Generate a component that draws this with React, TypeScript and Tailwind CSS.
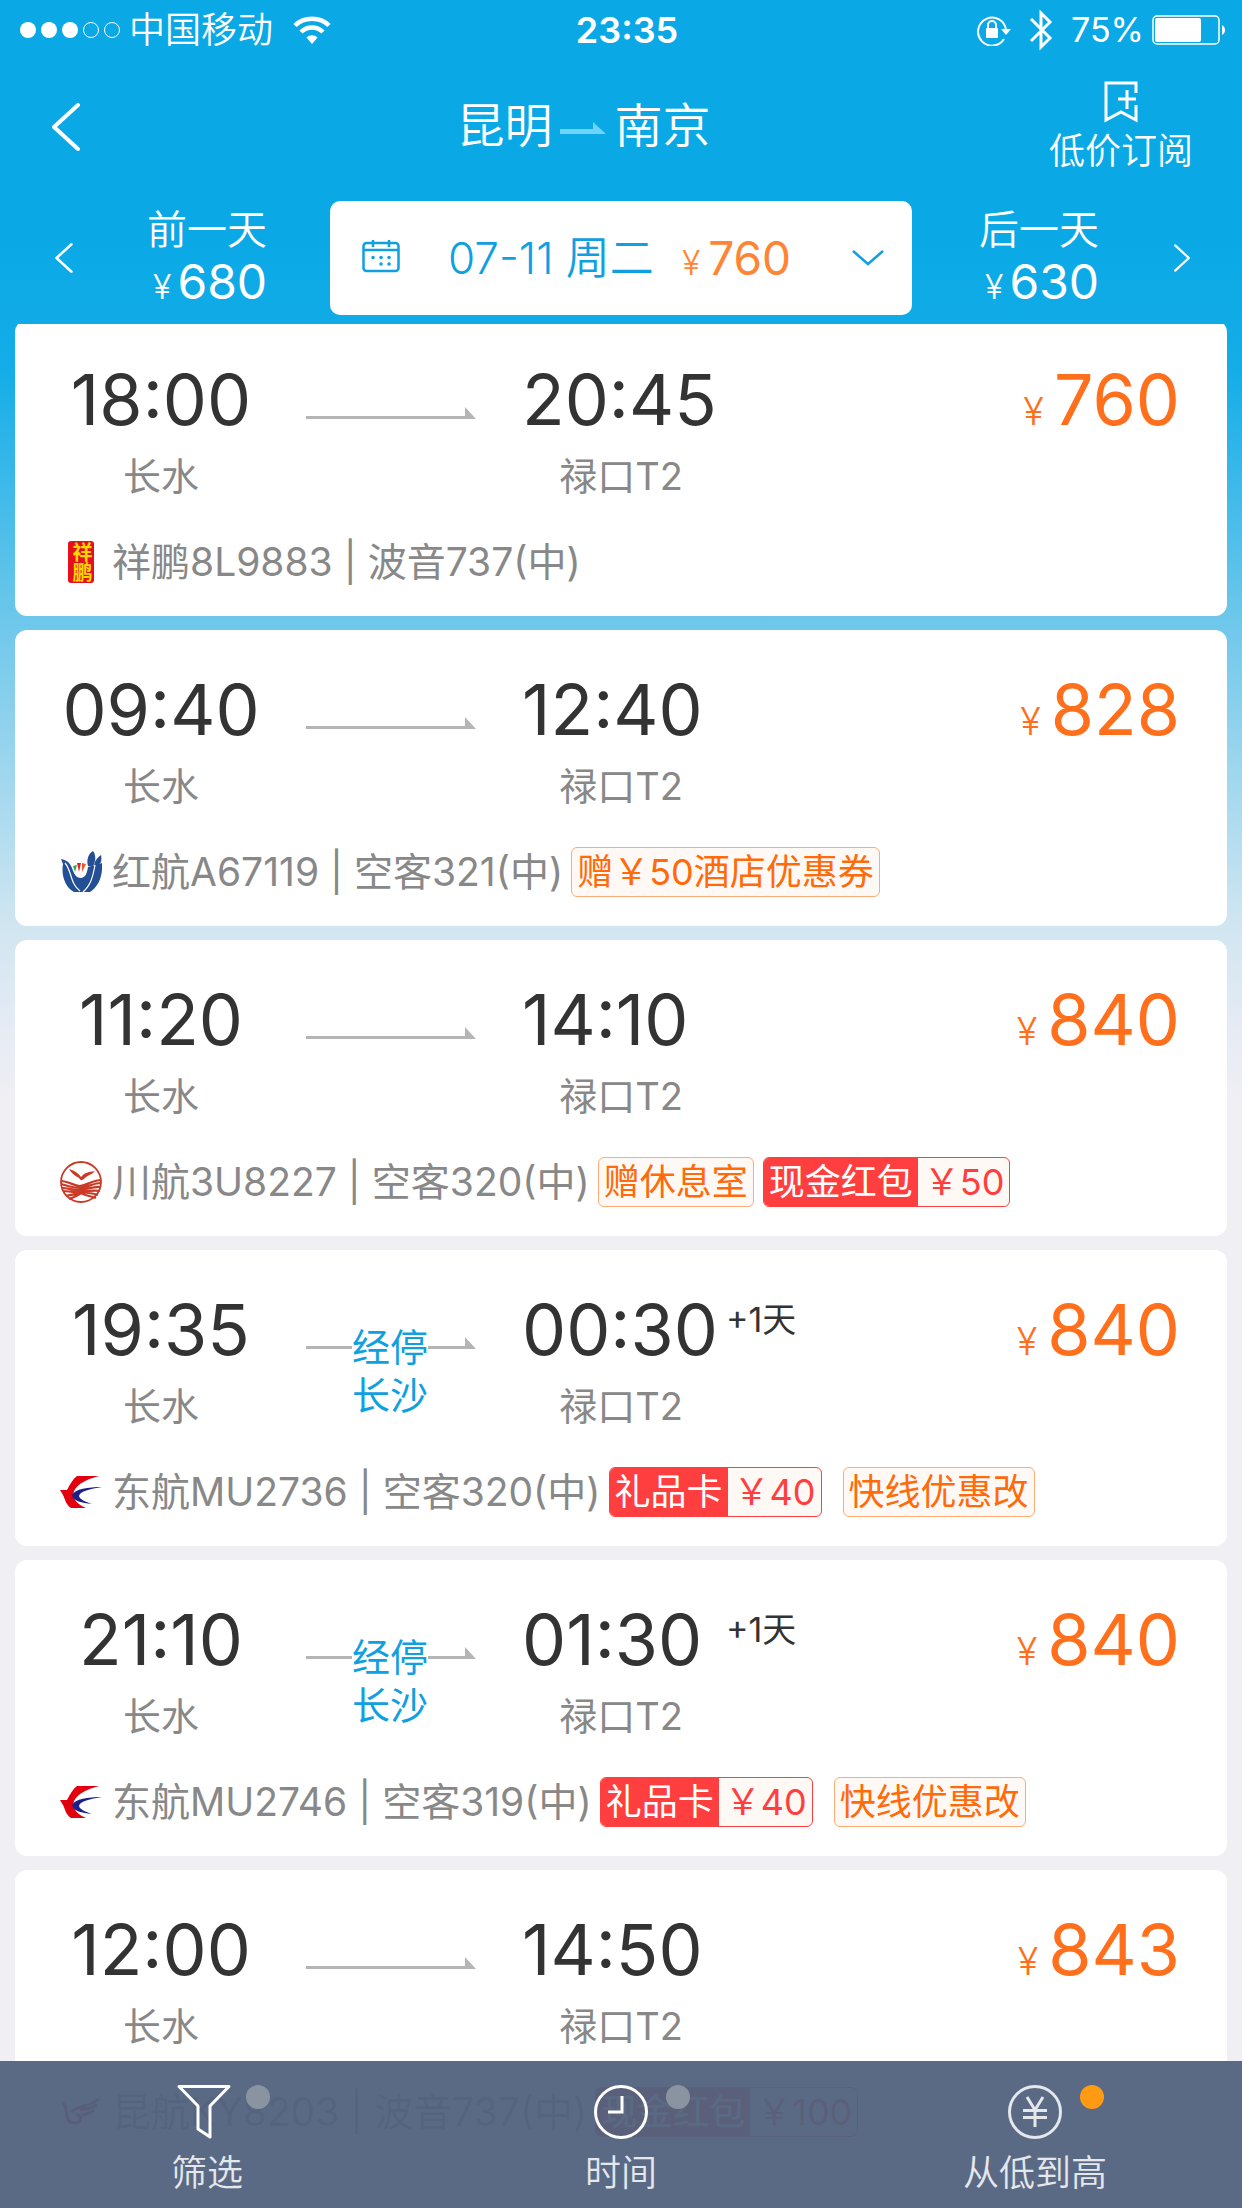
import type { ReactNode } from "react";

type Tag = { text: string; amount?: string };

type Flight = {
  depart: string;
  arrive: string;
  nextDay?: boolean;
  stop?: string;
  price: string;
  logo: ReactNode;
  airline: string;
  plane: string;
  tags: Tag[];
};

const XiangPengLogo = () => (
  <svg viewBox="0 0 42 42" className="size-[42px]" aria-hidden="true">
    <rect x="8" y="0" width="26" height="42" rx="3" fill="#e60f1e" />
    <text x="21" y="1" fontSize="20" fontWeight="700" fill="#ffd800" className="[writing-mode:vertical-rl]">
      祥鹏
    </text>
  </svg>
);

const HongTuLogo = () => (
  <svg viewBox="0 0 42 42" className="size-[42px]" aria-hidden="true">
    <path
      d="M1 8C7 9 10 12 12 17C14 23 16 27 21 27C26 26 27 22 28 16C31 15 37 14 42 12C43 26 38 36 30 41H14C5 36 1 24 3 13Z"
      fill="#234f95"
    />
    <path d="M28 15C26 8 29 2 33 0C36 4 36 10 33 15Z" fill="#234f95" />
    <path d="M34 14C35 9 38 6 41 4C42 9 41 12 39 14Z" fill="#234f95" />
    <path d="M5 12C12 20 10 33 20 40M35 14C33 25 31 34 23 41" fill="none" stroke="#fff" strokeWidth="1.200" />
    <path d="M15 21L13 15L17 14Z" fill="#2faa4e" />
    <path d="M19 21L17 12L21 12Z" fill="#e3232c" />
    <path d="M22 21L22 12L26 13Z" fill="#f0582b" />
  </svg>
);

const SichuanLogo = () => (
  <svg viewBox="0 0 42 42" className="size-[42px]" fill="none" stroke="#cb3a26" aria-hidden="true">
    <circle cx="21" cy="21" r="20" strokeWidth="1.800" />
    <path
      d="M9 8C15 10 18 12 21 16C24 12 28 11 35 10C32 14 27 14 24 18C22 20 20 19 19 17C15 15 11 12 9 8Z"
      fill="#cb3a26"
      stroke="none"
    />
    <path
      d="M1 20C8 20 14 25 20 25C27 24 34 19 41 19M1 23C8 25 14 27 20 27C28 26 34 22 41 22M2 27C9 27 14 30 20 29C28 28 34 25 41 26M3 30C10 30 14 32 20 31C28 30 34 29 40 30M6 35C11 33 17 34 21 31C27 32 33 32 38 34M9 38C14 36 18 35 21 32C26 35 31 35 36 37"
      strokeWidth="2.200"
    />
  </svg>
);

const EasternLogo = () => (
  <svg viewBox="0 0 42 42" className="size-[42px]" aria-hidden="true">
    <path
      d="M0 19H7C10 13 13 8 17 5H39C28 8 18 12 14 20C11 28 19 34 26 37H11C6 34 5 28 3 24Z"
      fill="#e2000f"
    />
    <path d="M42 16C28 16 15 18 12 24C13 30 22 32 32 33C26 31 19 28 19 25C20 20 30 18 42 16Z" fill="#1c1f86" />
  </svg>
);

const KunmingLogo = () => (
  <svg viewBox="0 0 42 42" className="size-[42px]" fill="none" stroke="#c8102e" strokeWidth="3" aria-hidden="true">
    <path d="M2 12C9 14 3 32 14 32C23 32 22 23 16 24M11 21C18 14 30 16 39 8M20 19C27 18 32 17 37 14M22 24C28 22 31 22 34 19" />
  </svg>
);

const flights: Flight[] = [
  {
    depart: "18:00",
    arrive: "20:45",
    price: "760",
    logo: <XiangPengLogo />,
    airline: "祥鹏8L9883",
    plane: "波音737(中)",
    tags: [],
  },
  {
    depart: "09:40",
    arrive: "12:40",
    price: "828",
    logo: <HongTuLogo />,
    airline: "红航A67119",
    plane: "空客321(中)",
    tags: [{ text: "赠￥50酒店优惠券" }],
  },
  {
    depart: "11:20",
    arrive: "14:10",
    price: "840",
    logo: <SichuanLogo />,
    airline: "川航3U8227",
    plane: "空客320(中)",
    tags: [{ text: "赠休息室" }, { text: "现金红包", amount: "50" }],
  },
  {
    depart: "19:35",
    arrive: "00:30",
    nextDay: true,
    stop: "长沙",
    price: "840",
    logo: <EasternLogo />,
    airline: "东航MU2736",
    plane: "空客320(中)",
    tags: [{ text: "礼品卡", amount: "40" }, { text: "快线优惠改" }],
  },
  {
    depart: "21:10",
    arrive: "01:30",
    nextDay: true,
    stop: "长沙",
    price: "840",
    logo: <EasternLogo />,
    airline: "东航MU2746",
    plane: "空客319(中)",
    tags: [{ text: "礼品卡", amount: "40" }, { text: "快线优惠改" }],
  },
  {
    depart: "12:00",
    arrive: "14:50",
    price: "843",
    logo: <KunmingLogo />,
    airline: "昆航KY8203",
    plane: "波音737(中)",
    tags: [{ text: "现金红包", amount: "100" }],
  },
];

const Chevron = ({ d, className }: { d: string; className: string }) => (
  <svg viewBox="0 0 28 48" className={className} fill="none" stroke="currentColor" aria-hidden="true">
    <path d={d} strokeLinecap="round" strokeLinejoin="round" />
  </svg>
);

const StatusBar = () => (
  <div className="grid h-[60px] grid-cols-[1fr_auto_1fr] items-center pl-5 pr-4 text-4xl">
    <div className="flex items-center">
      <div className="flex gap-[5px] mr-[9px]">
        <i className="size-4 rounded-full bg-white" />
        <i className="size-4 rounded-full bg-white" />
        <i className="size-4 rounded-full bg-white" />
        <i className="size-4 rounded-full border border-white" />
        <i className="size-4 rounded-full border border-white" />
      </div>
      <span className="font-[350]">中国移动</span>
      <svg viewBox="0 0 38 28" className="ml-5 h-7 w-[38px]" fill="none" stroke="#fff" aria-hidden="true">
        <path d="M2 9.500C11 .5 27 .5 36 9.500" strokeWidth="4.500" />
        <path d="M8 16C14 10 24 10 30 16" strokeWidth="4.500" />
        <path d="M19 28L13.500 21.500C16.500 18.500 21.500 18.500 24.500 21.500Z" fill="#fff" stroke="none" />
      </svg>
    </div>
    <div className="pl-2 font-semibold">23:35</div>
    <div className="flex items-center justify-end">
      <svg viewBox="0 0 34 32" className="h-8 w-[34px]" fill="none" stroke="#fff" strokeWidth="2" aria-hidden="true">
        <path d="M27 25A14 14 0 1 1 29 16" />
        <path d="M24 15H34L29 21Z" fill="#fff" stroke="none" />
        <path d="M11 15V11A4 4 0 0 1 19 11V15" />
        <rect x="9" y="14" width="12" height="10" rx="1" fill="#fff" stroke="none" />
      </svg>
      <svg viewBox="0 0 24 42" className="ml-[18px] h-[42px] w-6" fill="none" stroke="#fff" strokeWidth="3" aria-hidden="true">
        <path d="M2 10L21 29L12 38V4L21 13L2 32" />
      </svg>
      <span className="ml-[18px] text-[34px]">75%</span>
      <svg viewBox="0 0 74 30" className="ml-2 h-[30px] w-[74px]" aria-hidden="true">
        <rect x="1" y="1" width="66" height="28" rx="4" fill="none" stroke="#fff" strokeWidth="1.500" />
        <rect x="3" y="3" width="46" height="24" rx="2" fill="#fff" />
        <path d="M70 10C74 12 74 18 70 20Z" fill="#fff" />
      </svg>
    </div>
  </div>
);

const DayPrice = ({ label, price }: { label: string; price: string }) => (
  <span className="text-center leading-[52px]">
    <span className="block text-[40px] font-[350]">{label}</span>
    <span className="block pl-1.5 text-[48px]">
      <span className="mr-1.5 text-[34px] font-[350]">¥</span>
      {price}
    </span>
  </span>
);

const Header = () => (
  <header className="shrink-0 pb-[9px] text-white">
    <StatusBar />
    <div className="flex h-[134px] items-center justify-between pl-[52px] pr-[49px]">
      <button aria-label="返回" className="w-[66px]">
        <Chevron d="M26 2L2 24L26 46" className="h-12 w-7 stroke-4" />
      </button>
      <h1 className="flex items-center pb-0.5 text-[48px] font-[350]">
        昆明
        <svg viewBox="0 0 46 12" className="mx-2 mt-1 h-3 w-[46px]" fill="#6fd4fb" aria-hidden="true">
          <path d="M0 7H33V0L46 12H0Z" />
        </svg>
        南京
      </h1>
      <button className="flex flex-col items-center text-4xl leading-[44px] font-[350]">
        <svg viewBox="0 0 34 42" className="mb-1.5 h-[42px] w-[34px]" fill="none" stroke="#fff" strokeWidth="3" aria-hidden="true">
          <path d="M32 12V2H2V39L17 31L32 39V24M14 18H32M23 9V28" />
        </svg>
        低价订阅
      </button>
    </div>
    <div className="mt-[7px] grid h-[114px] grid-cols-[330px_1fr_330px]">
      <button className="flex items-center gap-[74px] pl-[55px]">
        <Chevron d="M26 2L2 24L26 46" className="h-[30px] w-[18px] stroke-4" />
        <DayPrice label="前一天" price="680" />
      </button>
      <button className="flex items-center rounded-[10px] bg-white pl-8 pr-7 text-[#109fe0]">
        <svg viewBox="0 0 38 34" className="mb-1 h-[34px] w-[38px]" fill="none" stroke="currentColor" strokeWidth="2.500" aria-hidden="true">
          <rect x="1.500" y="4" width="35" height="28" rx="3" />
          <path d="M2 11H36M11 1V8M27 1V8" />
          <path
            d="M11 18.500h.1M19 18.500h.1M27 18.500h.1M19 25h.1M27 25h.1"
            strokeWidth="3.500"
            strokeLinecap="round"
          />
        </svg>
        <span className="ml-12 text-[44px] font-[350]">07-11 周二</span>
        <span className="ml-7 text-[46px] text-[#ff8534]">
          <span className="mr-2 text-[34px] font-[350]">¥</span>760
        </span>
        <svg viewBox="0 0 32 16" className="ml-auto h-4 w-8" fill="none" stroke="currentColor" strokeWidth="2.500" aria-hidden="true">
          <path d="M1 1L16 14L31 1" />
        </svg>
      </button>
      <button className="flex items-center justify-between pl-[67px] pr-[52px]">
        <DayPrice label="后一天" price="630" />
        <Chevron d="M2 2L26 24L2 46" className="h-7 w-4 stroke-4" />
      </button>
    </div>
  </header>
);

const TagBadge = ({ tag }: { tag: Tag }) =>
  tag.amount ? (
    <span className="mr-3 flex h-[50px] overflow-hidden rounded-md border border-[#ff3f3f] bg-[#fff9f5] text-[#ff3f3f]">
      <span className="bg-[#ff3f3f] px-[5px] text-white">{tag.text}</span>
      <span className="pl-1.5 pr-[5px]">￥{tag.amount}</span>
    </span>
  ) : (
    <span className="h-[50px] rounded-md border border-[#ffab75] bg-[#fff9f5] px-[5px] text-[#ff6a0a]">{tag.text}</span>
  );

// thin line with a half arrow head, broken in the middle when the flight stops over
const Route = ({ stop }: { stop?: string }) => (
  <div className="flex w-[170px] items-center self-start pt-[33px] text-[38px] leading-[48px] text-[#109fe0]">
    <div className="h-[3px] flex-1 self-start mt-[23px] bg-[#b5b5b5]" />
    {stop && (
      <div className="h-12 w-[76px] text-center">
        经停
        <br />
        {stop}
      </div>
    )}
    <svg viewBox="0 0 48 12" className="mt-3.5 h-3 w-12 self-start" fill="#b5b5b5" aria-hidden="true">
      <path d="M0 9H37V0L48 12H0Z" />
    </svg>
  </div>
);

const FlightCard = ({ flight }: { flight: Flight }) => (
  <li className="rounded-xl bg-white pt-10 pb-[29px] pl-[45px] pr-[47px]">
    <div className="flex text-[70px] leading-[80px] text-[#333]">
      <div className="w-[202px] text-center">
        <div>{flight.depart}</div>
        <div className="mt-3 text-[38px] leading-[48px] text-[#888]">长水</div>
      </div>
      <div className="ml-11 flex">
        <Route stop={flight.stop} />
      </div>
      <div className="ml-[46px] w-[198px]">
        <div className="flex whitespace-nowrap">
          <span className="w-48 shrink-0">{flight.arrive}</span>
          {flight.nextDay && <span className="ml-3 text-[34px] leading-[60px]">+1天</span>}
        </div>
        <div className="mt-3 text-center text-[38px] leading-[48px] text-[#888]">禄口T2</div>
      </div>
      <div className="ml-auto text-[#ff6f1c]">
        <span className="mr-2.5 text-[38px] font-[350]">¥</span>
        {flight.price}
      </div>
    </div>
    <div className="mt-[37px] flex h-[50px] items-center text-[39px] text-[#888]">
      {flight.logo}
      <span className="ml-2.5 mr-2">
        {flight.airline} | {flight.plane}
      </span>
      <div className="flex gap-[9px] text-4xl leading-[48px]">
        {flight.tags.map((tag) => (
          <TagBadge key={tag.text} tag={tag} />
        ))}
      </div>
    </div>
  </li>
);

const TabBar = () => (
  <nav className="absolute inset-x-0 bottom-0 grid h-[147px] grid-cols-3 bg-[#52627d]/95 text-4xl leading-[44px] font-[350] text-[#e4e7ec]">
    <button className="flex flex-col items-center pt-6">
      <span className="relative mr-1.5">
        <svg viewBox="0 0 54 54" className="size-[54px]" fill="none" stroke="#fff" strokeWidth="3" aria-hidden="true">
          <path d="M2 1.500H52L33 21V52L21 44V21Z" strokeLinejoin="round" />
        </svg>
        <i className="absolute top-0 left-[69px] size-6 rounded-full bg-[#8a94a0]" />
      </span>
      <span className="mt-3">筛选</span>
    </button>
    <button className="flex flex-col items-center pt-6">
      <span className="relative">
        <svg viewBox="0 0 54 54" className="size-[54px]" fill="none" stroke="#fff" strokeWidth="3" aria-hidden="true">
          <circle cx="27" cy="27" r="25.500" />
          <path d="M28 11V27H14" />
        </svg>
        <i className="absolute top-0 left-[72px] size-6 rounded-full bg-[#8a94a0]" />
      </span>
      <span className="mt-3">时间</span>
    </button>
    <button className="flex flex-col items-center pt-6">
      <span className="relative">
        <svg viewBox="0 0 54 54" className="size-[54px]" fill="none" stroke="currentColor" strokeWidth="3" aria-hidden="true">
          <circle cx="27" cy="27" r="25.500" />
          <path d="M19 12L27 25L35 12M27 25V42M15 25.500H39M15 32.500H39" />
        </svg>
        <i className="absolute top-0 left-[72px] size-6 rounded-full bg-[#ff9a14]" />
      </span>
      <span className="mt-3">从低到高</span>
    </button>
  </nav>
);

const App = () => {
  return (
    <div className="relative flex h-screen flex-col overflow-hidden bg-[#f0eff4] bg-[linear-gradient(#0aa9e6_0px,#0aa9e6_240px,#14ade8_370px,#6fc8eb_625px,#d2e6f1_930px,#e6ebf4_1030px,#f0eff4_1100px)] font-['Inter','Noto_Sans_CJK_SC',sans-serif]">
      <Header />
      <main className="min-h-0 flex-1 overflow-hidden px-[15px]">
        <ul className="-mt-1 flex flex-col gap-3.5">
          {flights.map((flight) => (
            <FlightCard key={flight.depart} flight={flight} />
          ))}
        </ul>
      </main>
      <TabBar />
    </div>
  );
};
export default App;
